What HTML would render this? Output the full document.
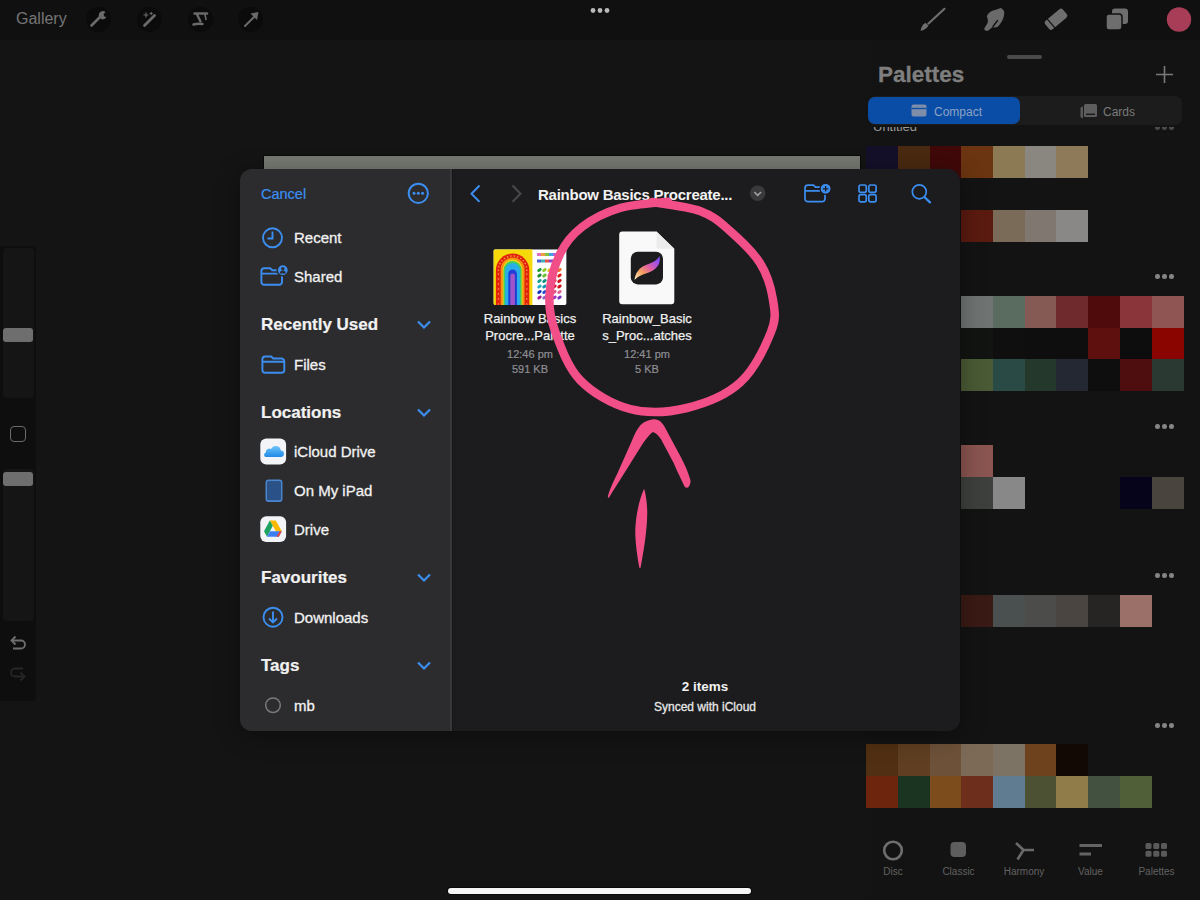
<!DOCTYPE html>
<html><head><meta charset="utf-8">
<style>
*{box-sizing:border-box;margin:0;padding:0}
html,body{width:1200px;height:900px;overflow:hidden;background:#141414;font-family:"Liberation Sans",sans-serif}
.abs{position:absolute}
#topbar{left:0;top:0;width:1200px;height:40px;background:#101010}
#gallery{left:16px;top:10px;font-size:16px;color:#757575}
.tcirc{width:25px;height:25px;border-radius:50%;background:#0b0b0b}
#palpanel{left:865px;top:40px;width:335px;height:860px;background:#131313}
.sw{position:absolute;width:32px;height:32px}
.dots{position:absolute;width:22px;height:6px}
.dots i{position:absolute;top:0;width:4.6px;height:4.6px;border-radius:50%;background:#858585}
#dialog{left:240px;top:169px;width:720px;height:562px;border-radius:12px;overflow:hidden;background:#1c1c1e;box-shadow:0 4px 24px rgba(0,0,0,0.35)}
#side{left:0;top:0;width:212px;height:562px;background:#2c2c2e;border-right:2px solid #38383a;box-shadow:1px 0 0 #161618}
.blue{color:#3b8ef0}
.si{position:absolute;left:54px;font-size:15px;color:#f2f2f2;-webkit-text-stroke:0.3px #f2f2f2}
.sh{position:absolute;left:21px;font-size:17px;font-weight:bold;color:#f2f2f2;-webkit-text-stroke:0.2px #f2f2f2}
.chev{position:absolute;left:176px;width:14px;height:9px}
</style></head>
<body>
<div id="topbar" class="abs">
  <div id="gallery" class="abs">Gallery</div>
  <div class="abs tcirc" style="left:86px;top:7px"></div>
  <div class="abs tcirc" style="left:137px;top:7px"></div>
  <div class="abs tcirc" style="left:188px;top:7px"></div>
  <div class="abs tcirc" style="left:238px;top:7px"></div>
  <svg class="abs" style="left:0;top:0" width="1200" height="40" viewBox="0 0 1200 40">
    <!-- wrench -->
    <path d="M91.5 25.5L100 17" stroke="#6a6a6a" stroke-width="2.6" stroke-linecap="round"/>
    <path d="M99 13.5a4.2 4.2 0 0 0 5.5 5.5l2-2-2.3-.6-.6-2.3 2-2a4.2 4.2 0 0 0-6.6 1.4z" fill="#6a6a6a"/>
    <!-- magic wand -->
    <path d="M144.5 25.5L154.5 15.5" stroke="#6a6a6a" stroke-width="2.8" stroke-linecap="round"/>
    <path d="M146 12.5v5M143.5 15h5M151.2 12v3M149.7 13.5h3" stroke="#6a6a6a" stroke-width="1.2"/>
    <!-- S selection -->
    <path d="M194.5 13.5h12.5" stroke="#6a6a6a" stroke-width="2.4" stroke-linecap="round"/>
    <path d="M197 14.5l3.5 7" stroke="#6a6a6a" stroke-width="2.4" stroke-linecap="round"/>
    <path d="M193.5 24.5c3-1 6-1 9-.5" stroke="#6a6a6a" stroke-width="2.4" stroke-linecap="round" fill="none"/>
    <path d="M205 14.5l1 5" stroke="#6a6a6a" stroke-width="1.6" stroke-linecap="round"/>
    <!-- arrow -->
    <path d="M245 26L255.5 15.5" stroke="#6a6a6a" stroke-width="2" stroke-linecap="round"/>
    <path d="M250.5 13.5l8-1.5-1.5 8z" fill="#6a6a6a"/>
    <!-- dots -->
    <circle cx="593" cy="10.5" r="2.4" fill="#b8b8b8"/><circle cx="600" cy="10.5" r="2.4" fill="#b8b8b8"/><circle cx="607" cy="10.5" r="2.4" fill="#b8b8b8"/>
    <!-- brush -->
    <path d="M928.5 23.5L944.5 8.8" stroke="#6e6e6e" stroke-width="2.2" stroke-linecap="round"/>
    <path d="M920.5 30.8c.5-3 2-6.5 5-8l3 2.8c-1.5 3-4.5 4.8-8 5.2z" fill="#6e6e6e"/>
    <!-- smudge -->
    <path d="M984.2 29.2C984.5 27 986.5 25.5 987.5 23C988.5 21 987.5 18 986.8 16.2C988 13.5 990 11.5 993 10.5C995.5 9.8 998 9.2 1000.6 8C1002.5 9 1004.5 10.5 1004.3 12.8C1004 15.5 1003.8 17.5 1002.8 19.5C1001.8 21.5 1000 24.5 997.8 26.8C996 27.5 994 28 992.5 27C990.5 28.5 989 30.5 987.8 30.8C986.5 31 984.8 30.5 984.2 29.2z" fill="#6a6a6a"/>
    <path d="M993 26.5L997.5 20.5" stroke="#101010" stroke-width="1.3" stroke-linecap="round"/>
    <!-- eraser -->
    <g transform="translate(1056 19.2) rotate(-40)">
      <rect x="-11.5" y="-5.5" width="23" height="11" rx="2.5" fill="#6e6e6e"/>
      <path d="M-6.5 -6V6" stroke="#101010" stroke-width="1.2"/>
    </g>
    <!-- layers -->
    <rect x="1112" y="8.5" width="16" height="15.5" rx="3" fill="#6e6e6e"/>
    <rect x="1106" y="14" width="16" height="16" rx="3" fill="#6e6e6e" stroke="#121212" stroke-width="1.5"/>
    <circle cx="1179" cy="19.5" r="12.2" fill="#a83d57"/>
  </svg>
</div>

<div id="leftbar" class="abs" style="left:0;top:246px;width:36px;height:455px;background:#0e0e0e;border-radius:0 4px 4px 0">
  <div class="abs" style="left:3px;top:2px;width:31px;height:150px;border-radius:4px;background:#151515"></div>
  <div class="abs" style="left:3px;top:82px;width:30px;height:14px;border-radius:3px;background:#6e6e6e"></div>
  <div class="abs" style="left:10px;top:180px;width:16px;height:16px;border-radius:4px;border:1.6px solid #6a6a6a"></div>
  <div class="abs" style="left:3px;top:223px;width:31px;height:152px;border-radius:4px;background:#151515"></div>
  <div class="abs" style="left:3px;top:226px;width:30px;height:14px;border-radius:3px;background:#6e6e6e"></div>
  <svg class="abs" style="left:8px;top:386px" width="20" height="50" viewBox="0 0 20 50">
    <path d="M4 8.5h9a4 4 0 0 1 0 8H5" fill="none" stroke="#6e6e6e" stroke-width="1.8"/>
    <path d="M7.5 4.5L3.5 8.5l4 4" fill="none" stroke="#6e6e6e" stroke-width="1.8"/>
    <path d="M16 44.5H7a4 4 0 0 1 0-8h8" fill="none" stroke="#262626" stroke-width="1.8"/>
    <path d="M12.5 40.5l4 4-4 4" fill="none" stroke="#262626" stroke-width="1.8"/>
  </svg>
</div>

<div id="palpanel" class="abs">
  <div class="abs" style="left:142px;top:15px;width:35px;height:4px;border-radius:2px;background:#4a4a4a"></div>
  <div class="abs" style="left:13px;top:21.5px;font-size:22.5px;font-weight:bold;color:#7e7e7e;-webkit-text-stroke:0.3px #7e7e7e">Palettes</div>
  <svg class="abs" style="left:290px;top:25px" width="19" height="19" viewBox="0 0 19 19"><path d="M9.5 1V18M1 9.5H18" stroke="#7a7a7a" stroke-width="1.6"/></svg>
  <div class="abs" style="left:3px;top:56px;width:314px;height:29px;border-radius:7px;background:#1c1c1c"></div>
  <div class="abs" style="left:3px;top:57px;width:152px;height:27px;border-radius:7px;background:#0a4da6"></div>
  <svg class="abs" style="left:0;top:56px" width="335" height="30" viewBox="865 96 335 30">
    <rect x="911.5" y="104.5" width="15" height="12" rx="2" fill="#7e8ea8"/>
    <path d="M911.5 108.5h15" stroke="#0a4da6" stroke-width="1.3"/>
    <path d="M1083 106.5l-2.5 1v9.5l2.5 1.5z" fill="#5a5a5a"/>
    <rect x="1084" y="104" width="13" height="13" rx="1.5" fill="#5e5e5e"/>
    <path d="M1086 114.3h9" stroke="#1c1c1c" stroke-width="1.5"/>
  </svg>
  <div class="abs" style="left:69px;top:64.5px;font-size:12px;color:#8ea2c4">Compact</div>
  <div class="abs" style="left:238px;top:64.5px;font-size:12px;color:#7a7a7a">Cards</div>
  <div class="abs" style="left:8px;top:79px;font-size:13px;color:#9a9a9a;clip-path:inset(8px 0 0 0)">Untitled</div>
<div class="sw" style="left:1.2px;top:106.0px;background:#14102a"></div>
<div class="sw" style="left:32.9px;top:106.0px;background:#4a2a10"></div>
<div class="sw" style="left:64.6px;top:106.0px;background:#400808"></div>
<div class="sw" style="left:96.3px;top:106.0px;background:#6a3510"></div>
<div class="sw" style="left:128.0px;top:106.0px;background:#8c7a55"></div>
<div class="sw" style="left:159.7px;top:106.0px;background:#8a8780"></div>
<div class="sw" style="left:191.4px;top:106.0px;background:#8e7a58"></div>
<div class="sw" style="left:96.3px;top:169.5px;background:#5a1a10"></div>
<div class="sw" style="left:128.0px;top:169.5px;background:#7a6a58"></div>
<div class="sw" style="left:159.7px;top:169.5px;background:#807870"></div>
<div class="sw" style="left:191.4px;top:169.5px;background:#8a8886"></div>
<div class="sw" style="left:96.3px;top:255.5px;background:#6f7473"></div>
<div class="sw" style="left:128.0px;top:255.5px;background:#5a6b60"></div>
<div class="sw" style="left:159.7px;top:255.5px;background:#855a55"></div>
<div class="sw" style="left:191.4px;top:255.5px;background:#6e2a2c"></div>
<div class="sw" style="left:223.1px;top:255.5px;background:#4f0a0c"></div>
<div class="sw" style="left:254.8px;top:255.5px;background:#8a353a"></div>
<div class="sw" style="left:286.5px;top:255.5px;background:#8e5553"></div>
<div class="sw" style="left:96.3px;top:287.5px;background:#111410"></div>
<div class="sw" style="left:128.0px;top:287.5px;background:#0f0f0f"></div>
<div class="sw" style="left:159.7px;top:287.5px;background:#0e0e0e"></div>
<div class="sw" style="left:191.4px;top:287.5px;background:#0e0e0e"></div>
<div class="sw" style="left:223.1px;top:287.5px;background:#5e100e"></div>
<div class="sw" style="left:254.8px;top:287.5px;background:#0d0d0d"></div>
<div class="sw" style="left:286.5px;top:287.5px;background:#8a0500"></div>
<div class="sw" style="left:96.3px;top:319.0px;background:#4a5a35"></div>
<div class="sw" style="left:128.0px;top:319.0px;background:#2a4a45"></div>
<div class="sw" style="left:159.7px;top:319.0px;background:#25382c"></div>
<div class="sw" style="left:191.4px;top:319.0px;background:#232833"></div>
<div class="sw" style="left:223.1px;top:319.0px;background:#0e0e0e"></div>
<div class="sw" style="left:254.8px;top:319.0px;background:#4e0e10"></div>
<div class="sw" style="left:286.5px;top:319.0px;background:#2a3a33"></div>
<div class="sw" style="left:96.3px;top:404.8px;background:#8a5550"></div>
<div class="sw" style="left:96.3px;top:436.5px;background:#3e403d"></div>
<div class="sw" style="left:128.0px;top:436.5px;background:#888888"></div>
<div class="sw" style="left:254.8px;top:436.5px;background:#05041a"></div>
<div class="sw" style="left:286.5px;top:436.5px;background:#4a443e"></div>
<div class="sw" style="left:96.3px;top:554.5px;background:#3a1a14"></div>
<div class="sw" style="left:128.0px;top:554.5px;background:#4a5050"></div>
<div class="sw" style="left:159.7px;top:554.5px;background:#4c4c4a"></div>
<div class="sw" style="left:191.4px;top:554.5px;background:#4a4540"></div>
<div class="sw" style="left:223.1px;top:554.5px;background:#272523"></div>
<div class="sw" style="left:254.8px;top:554.5px;background:#9a7068"></div>
<div class="sw" style="left:1.2px;top:703.8px;background:#512f12"></div>
<div class="sw" style="left:32.9px;top:703.8px;background:#5f3e21"></div>
<div class="sw" style="left:64.6px;top:703.8px;background:#6d5139"></div>
<div class="sw" style="left:96.3px;top:703.8px;background:#7c6956"></div>
<div class="sw" style="left:128.0px;top:703.8px;background:#7c7364"></div>
<div class="sw" style="left:159.7px;top:703.8px;background:#6d421c"></div>
<div class="sw" style="left:191.4px;top:703.8px;background:#120904"></div>
<div class="sw" style="left:1.2px;top:735.8px;background:#6d250e"></div>
<div class="sw" style="left:32.9px;top:735.8px;background:#1b3421"></div>
<div class="sw" style="left:64.6px;top:735.8px;background:#7c4c1c"></div>
<div class="sw" style="left:96.3px;top:735.8px;background:#6d2f1c"></div>
<div class="sw" style="left:128.0px;top:735.8px;background:#5f7c90"></div>
<div class="sw" style="left:159.7px;top:735.8px;background:#4c5134"></div>
<div class="sw" style="left:191.4px;top:735.8px;background:#907c48"></div>
<div class="sw" style="left:223.1px;top:735.8px;background:#425140"></div>
<div class="sw" style="left:254.8px;top:735.8px;background:#515f39"></div>

  <div class="abs" style="left:285px;top:87px;width:30px;height:5px;overflow:hidden"><div class="dots" style="left:5px;top:-2px"><i style="left:0;background:#4a4a4a"></i><i style="left:7px;background:#4a4a4a"></i><i style="left:14px;background:#4a4a4a"></i></div></div>
  <div class="dots" style="left:290px;top:234px"><i style="left:0"></i><i style="left:7px"></i><i style="left:14px"></i></div>
  <div class="dots" style="left:290px;top:384px"><i style="left:0"></i><i style="left:7px"></i><i style="left:14px"></i></div>
  <div class="dots" style="left:290px;top:533px"><i style="left:0"></i><i style="left:7px"></i><i style="left:14px"></i></div>
  <div class="dots" style="left:290px;top:683px"><i style="left:0"></i><i style="left:7px"></i><i style="left:14px"></i></div>
  <svg class="abs" style="left:0;top:790px" width="335" height="50" viewBox="865 830 335 50">
    <circle cx="893" cy="850.5" r="8.8" fill="none" stroke="#6e6e6e" stroke-width="2.6"/>
    <rect x="950.5" y="842" width="15.5" height="15" rx="4" fill="#5e5e5e"/>
    <path d="M1016 843L1023.5 850L1017.5 859.5M1023.5 850H1034" fill="none" stroke="#6a6a6a" stroke-width="2.6"/>
    <path d="M1079.5 845.5H1102M1079.5 854H1091" stroke="#646464" stroke-width="3.2"/>
    <g fill="#5a5a5a"><rect x="1145.5" y="843" width="6" height="6" rx="1.5"/><rect x="1153.3" y="843" width="6" height="6" rx="1.5"/><rect x="1161" y="843" width="6" height="6" rx="1.5"/><rect x="1145.5" y="850.8" width="6" height="6" rx="1.5"/><rect x="1153.3" y="850.8" width="6" height="6" rx="1.5"/><rect x="1161" y="850.8" width="6" height="6" rx="1.5"/></g>
    <g font-family="Liberation Sans" font-size="10" fill="#626262" text-anchor="middle"><text x="893" y="874.5">Disc</text><text x="958.5" y="874.5">Classic</text><text x="1024" y="874.5">Harmony</text><text x="1090.5" y="874.5">Value</text><text x="1156.5" y="874.5">Palettes</text></g>
  </svg>
</div>


<div class="abs" style="left:264px;top:156px;width:596px;height:13px;background:#777973;box-shadow:0 0 0 1px #0a0a0a"></div>

<div id="dialog" class="abs">
  <div id="side" class="abs">
    <div class="abs blue" style="left:21px;top:16.5px;font-size:14.5px;-webkit-text-stroke:0.2px #3b8ef0">Cancel</div>
    <svg class="abs" style="left:0;top:0" width="211" height="562" viewBox="240 169 211 562">
      <defs><linearGradient id="icg" x1="0" y1="0" x2="0" y2="1"><stop offset="0" stop-color="#6cc4fa"/><stop offset="1" stop-color="#1f8ae8"/></linearGradient></defs>
      <g fill="none" stroke="#3b8ef0" stroke-width="1.9">
        <circle cx="418.3" cy="193.3" r="9.6" stroke-width="2"/>
        <circle cx="272.5" cy="237.8" r="9.5"/>
        <path d="M272.5 231.5V238.5H267.5"/>
        <path d="M264.2 268.2h6l2 2h7a2.8 2.8 0 0 1 2.8 2.8v9a2.8 2.8 0 0 1-2.8 2.8h-15a2.8 2.8 0 0 1-2.8-2.8v-11a2.8 2.8 0 0 1 2.8-2.8z M261.5 273.6h20"/>
        <path d="M265.2 356.5h6l2 2h8.3a2.8 2.8 0 0 1 2.8 2.8v8.7a2.8 2.8 0 0 1-2.8 2.8h-16.3a2.8 2.8 0 0 1-2.8-2.8v-10.7a2.8 2.8 0 0 1 2.8-2.8z M262.4 361.8h21.9"/>
        <rect x="266.5" y="480.5" width="15" height="20.5" rx="2" stroke="#4a86d0"/>
        <circle cx="273" cy="617.2" r="9.5"/>
        <path d="M273 611.5v10.5M269 618.5l4 4 4-4"/>
        <path d="M418 321.5l6 6 6-6M418 409.5l6 6 6-6M418 574.5l6 6 6-6M418 662.5l6 6 6-6" stroke-width="2.2"/>
      </g>
      <g fill="#3b8ef0"><circle cx="414" cy="193.3" r="1.5"/><circle cx="418.3" cy="193.3" r="1.5"/><circle cx="422.6" cy="193.3" r="1.5"/>
      <circle cx="282.8" cy="270.2" r="5.6" stroke="#2c2c2e" stroke-width="1.5"/></g>
      <rect x="267.2" y="481.2" width="13.6" height="19.1" rx="1.5" fill="#2a5288"/>
      <circle cx="282.8" cy="268.8" r="1.7" fill="#2c2c2e"/><path d="M279.8 273.6a3 3 0 0 1 6 0z" fill="#2c2c2e"/>
      <circle cx="273" cy="705.2" r="7.3" fill="none" stroke="#7a7a7e" stroke-width="1.5"/>
      <!-- iCloud -->
      <rect x="260.3" y="438.6" width="25.8" height="25.8" rx="6" fill="#f2f4f7"/>
      <path d="M266 457h14.5a3.3 3.3 0 0 0 .3-6.6 5.2 5.2 0 0 0-9.8-1.5 3.8 3.8 0 0 0-5.3 3.8 2.2 2.2 0 0 0 .3 4.3z" fill="url(#icg)"/>
      <!-- Drive -->
      <rect x="260.3" y="516.2" width="25.8" height="25.8" rx="6" fill="#f2f4f7"/>
      <path d="M269.8 520.5H275.8L281.8 531.2H275.8z" fill="#ffba00"/>
      <path d="M269.8 520.5L272.8 525.8L267 536.8L264 531.2z" fill="#1ea362"/>
      <path d="M267 536.8H278.8L281.8 531.2H270z" fill="#3b7ef0"/>
      <path d="M278.8 536.8L281.8 531.2H279.5L276.5 536.8z" fill="#e8453c"/>
    </svg>
    <div class="si" style="top:60px">Recent</div>
    <div class="si" style="top:99px">Shared</div>
    <div class="sh" style="top:146px">Recently Used</div>
    <div class="si" style="top:187px">Files</div>
    <div class="sh" style="top:234px">Locations</div>
    <div class="si" style="top:274px">iCloud Drive</div>
    <div class="si" style="top:313px">On My iPad</div>
    <div class="si" style="top:352px">Drive</div>
    <div class="sh" style="top:399px">Favourites</div>
    <div class="si" style="top:440px">Downloads</div>
    <div class="sh" style="top:487px">Tags</div>
    <div class="si" style="top:528px">mb</div>
  </div>
  <svg class="abs" style="left:0;top:0" width="720" height="562" viewBox="240 169 720 562">
    <path d="M479.5 185.5l-8 8.2 8 8.2" fill="none" stroke="#3b8ef0" stroke-width="2"/>
    <path d="M512.5 185.5l8 8.2-8 8.2" fill="none" stroke="#4a4a4c" stroke-width="2"/>
    <circle cx="757.7" cy="193.3" r="7.8" fill="#3a3a3c"/>
    <path d="M754.3 192l3.4 3.4 3.4-3.4" fill="none" stroke="#a0a0a4" stroke-width="1.5"/>
    <g fill="none" stroke="#3b8ef0" stroke-width="1.7">
      <path d="M808 185.2h5.5l2 2h6.5a3 3 0 0 1 3 3v8.5a3 3 0 0 1-3 3h-14a3 3 0 0 1-3-3v-10.5a3 3 0 0 1 3-3z M805.5 190.8h19"/>
      <rect x="859" y="185" width="7.3" height="7.3" rx="1.8"/><rect x="868.8" y="185" width="7.3" height="7.3" rx="1.8"/>
      <rect x="859" y="194.6" width="7.3" height="7.3" rx="1.8"/><rect x="868.8" y="194.6" width="7.3" height="7.3" rx="1.8"/>
      <circle cx="919.3" cy="191.8" r="7"/>
      <path d="M924.6 197.2l5.4 5.2" stroke-width="2.2" stroke-linecap="round"/>
    </g>
    <circle cx="825.6" cy="188.8" r="5.6" fill="#3b8ef0" stroke="#1c1c1e" stroke-width="1.4"/>
    <path d="M825.6 186v5.6M822.8 188.8h5.6" stroke="#1c1c1e" stroke-width="1.3"/>
  </svg>
  <div class="abs" style="left:298px;font-size:15px;letter-spacing:-0.25px;top:16.5px;font-weight:bold;color:#f2f2f2">Rainbow Basics Procreate...</div>
<svg class="abs" style="left:0;top:0" width="720" height="562" viewBox="240 169 720 562">
    <defs>
      <clipPath id="thc"><rect x="493.4" y="249.3" width="73.2" height="55.7" rx="2"/></clipPath>
      <linearGradient id="pg" x1="0" y1="1" x2="1" y2="0">
        <stop offset="0" stop-color="#fff4c8"/><stop offset="0.3" stop-color="#f5a060"/><stop offset="0.55" stop-color="#e060a0"/><stop offset="0.8" stop-color="#a050e8"/><stop offset="1" stop-color="#6a50f0"/>
      </linearGradient>
    </defs>
    <g clip-path="url(#thc)">
      <rect x="493.4" y="249.3" width="73.2" height="55.7" fill="#ffffff"/>
      <rect x="493.4" y="249.3" width="39" height="55.7" fill="#f5d90a"/>
      <path d="M495.9 306V270.2a16.7 16.7 0 0 1 33.4 0V306z" fill="#e3220f"/>
      <path d="M500.7 306V269.4a11.9 11.9 0 0 1 23.8 0V306z" fill="#f7940f"/>
      <path d="M502.8 306V269.3a9.8 9.8 0 0 1 19.6 0V306z" fill="#f2d21a"/>
      <path d="M503.6 306V270.0a9.0 9.0 0 0 1 18.0 0V306z" fill="#3fcf5a"/>
      <path d="M505.1 306V270.5a7.5 7.5 0 0 1 15.0 0V306z" fill="#2aaee8"/>
      <path d="M508.3 306V273.8a4.3 4.3 0 0 1 8.6 0V306z" fill="#1f3fd6"/>
      <path d="M510.3 306V275.8a2.3 2.3 0 0 1 4.6 0V306z" fill="#a056c8"/>
      <circle cx="498.4" cy="270.2" r="0.8" fill="#f7a040"/>
      <circle cx="498.8" cy="266.8" r="0.8" fill="#f7a040"/>
      <circle cx="500.0" cy="263.6" r="0.8" fill="#f7a040"/>
      <circle cx="502.0" cy="260.8" r="0.8" fill="#f7a040"/>
      <circle cx="504.5" cy="258.5" r="0.8" fill="#f7a040"/>
      <circle cx="507.6" cy="256.9" r="0.8" fill="#f7a040"/>
      <circle cx="510.9" cy="256.1" r="0.8" fill="#f7a040"/>
      <circle cx="514.3" cy="256.1" r="0.8" fill="#f7a040"/>
      <circle cx="517.6" cy="256.9" r="0.8" fill="#f7a040"/>
      <circle cx="520.7" cy="258.5" r="0.8" fill="#f7a040"/>
      <circle cx="523.2" cy="260.8" r="0.8" fill="#f7a040"/>
      <circle cx="525.2" cy="263.6" r="0.8" fill="#f7a040"/>
      <circle cx="526.4" cy="266.8" r="0.8" fill="#f7a040"/>
      <circle cx="526.8" cy="270.2" r="0.8" fill="#f7a040"/>
      <circle cx="498.4" cy="274" r="0.8" fill="#f7a040"/><circle cx="526.8" cy="274" r="0.8" fill="#f7a040"/>
      <circle cx="498.4" cy="279" r="0.8" fill="#f7a040"/><circle cx="526.8" cy="279" r="0.8" fill="#f7a040"/>
      <circle cx="498.4" cy="284" r="0.8" fill="#f7a040"/><circle cx="526.8" cy="284" r="0.8" fill="#f7a040"/>
      <circle cx="498.4" cy="289" r="0.8" fill="#f7a040"/><circle cx="526.8" cy="289" r="0.8" fill="#f7a040"/>
      <circle cx="498.4" cy="294" r="0.8" fill="#f7a040"/><circle cx="526.8" cy="294" r="0.8" fill="#f7a040"/>
      <circle cx="498.4" cy="299" r="0.8" fill="#f7a040"/><circle cx="526.8" cy="299" r="0.8" fill="#f7a040"/>
      <circle cx="498.4" cy="304" r="0.8" fill="#f7a040"/><circle cx="526.8" cy="304" r="0.8" fill="#f7a040"/>
      <g stroke-width="3.2"><path d="M537 254.5h4" stroke="#e070c0"/><path d="M541 254.5h4" stroke="#f0a040"/><path d="M545 254.5h4" stroke="#80c040"/><path d="M549 254.5h4" stroke="#40a0e0"/><path d="M553 254.5h5" stroke="#b060e0"/><path d="M537 261h4" stroke="#5060d0"/><path d="M541 261h4" stroke="#40b0b0"/><path d="M545 261h4" stroke="#e05050"/><path d="M549 261h5" stroke="#9040c0"/></g>
      <g>
        <ellipse cx="539.5" cy="270" rx="2.4" ry="1.6" transform="rotate(-35 539.5 270)" fill="#1e9a3a"/><ellipse cx="544.5" cy="270" rx="2.4" ry="1.6" transform="rotate(-35 544.5 270)" fill="#8acc2a"/><ellipse cx="549.5" cy="270" rx="2.4" ry="1.6" transform="rotate(-35 549.5 270)" fill="#e8c020"/><ellipse cx="554.5" cy="270" rx="2.4" ry="1.6" transform="rotate(-35 554.5 270)" fill="#f08a20"/><ellipse cx="559.5" cy="270" rx="2.4" ry="1.6" transform="rotate(-35 559.5 270)" fill="#f06a20"/>
        <ellipse cx="539.5" cy="275.5" rx="2.4" ry="1.6" transform="rotate(-35 539.5 275.5)" fill="#1a8a30"/><ellipse cx="544.5" cy="275.5" rx="2.4" ry="1.6" transform="rotate(-35 544.5 275.5)" fill="#6abf2a"/><ellipse cx="549.5" cy="275.5" rx="2.4" ry="1.6" transform="rotate(-35 549.5 275.5)" fill="#f0a030"/><ellipse cx="554.5" cy="275.5" rx="2.4" ry="1.6" transform="rotate(-35 554.5 275.5)" fill="#e83020"/><ellipse cx="559.5" cy="275.5" rx="2.4" ry="1.6" transform="rotate(-35 559.5 275.5)" fill="#e01818"/>
        <ellipse cx="539.5" cy="281" rx="2.4" ry="1.6" transform="rotate(-35 539.5 281)" fill="#18a090"/><ellipse cx="544.5" cy="281" rx="2.4" ry="1.6" transform="rotate(-35 544.5 281)" fill="#109080"/><ellipse cx="549.5" cy="281" rx="2.4" ry="1.6" transform="rotate(-35 549.5 281)" fill="#e03040"/><ellipse cx="554.5" cy="281" rx="2.4" ry="1.6" transform="rotate(-35 554.5 281)" fill="#e02030"/><ellipse cx="559.5" cy="281" rx="2.4" ry="1.6" transform="rotate(-35 559.5 281)" fill="#d01020"/>
        <ellipse cx="539.5" cy="286.5" rx="2.4" ry="1.6" transform="rotate(-35 539.5 286.5)" fill="#20b0c0"/><ellipse cx="544.5" cy="286.5" rx="2.4" ry="1.6" transform="rotate(-35 544.5 286.5)" fill="#1890b0"/><ellipse cx="549.5" cy="286.5" rx="2.4" ry="1.6" transform="rotate(-35 549.5 286.5)" fill="#e02040"/><ellipse cx="554.5" cy="286.5" rx="2.4" ry="1.6" transform="rotate(-35 554.5 286.5)" fill="#d81030"/><ellipse cx="559.5" cy="286.5" rx="2.4" ry="1.6" transform="rotate(-35 559.5 286.5)" fill="#d01018"/>
        <ellipse cx="539.5" cy="292" rx="2.4" ry="1.6" transform="rotate(-35 539.5 292)" fill="#1830c0"/><ellipse cx="544.5" cy="292" rx="2.4" ry="1.6" transform="rotate(-35 544.5 292)" fill="#2050d0"/><ellipse cx="549.5" cy="292" rx="2.4" ry="1.6" transform="rotate(-35 549.5 292)" fill="#e04070"/><ellipse cx="554.5" cy="292" rx="2.4" ry="1.6" transform="rotate(-35 554.5 292)" fill="#e05080"/><ellipse cx="559.5" cy="292" rx="2.4" ry="1.6" transform="rotate(-35 559.5 292)" fill="#e06090"/>
        <ellipse cx="539.5" cy="297.5" rx="2.4" ry="1.6" transform="rotate(-35 539.5 297.5)" fill="#a01890"/><ellipse cx="544.5" cy="297.5" rx="2.4" ry="1.6" transform="rotate(-35 544.5 297.5)" fill="#9060c0"/><ellipse cx="549.5" cy="297.5" rx="2.4" ry="1.6" transform="rotate(-35 549.5 297.5)" fill="#b040b0"/><ellipse cx="554.5" cy="297.5" rx="2.4" ry="1.6" transform="rotate(-35 554.5 297.5)" fill="#a030c0"/><ellipse cx="559.5" cy="297.5" rx="2.4" ry="1.6" transform="rotate(-35 559.5 297.5)" fill="#8030c0"/>
      </g>
    </g>
    <path d="M622.2 231.5h34.3l17.8 17.3v52.4a3 3 0 0 1-3 3h-49.1a3 3 0 0 1-3-3v-66.7a3 3 0 0 1 3-3z" fill="#f9f9f9"/>
    <path d="M656.5 231.5v14.3a3 3 0 0 0 3 3h14.8z" fill="#ececec"/>
    <rect x="630.8" y="251.8" width="32.2" height="32.6" rx="7" fill="#1c1c1e"/>
    <path d="M634.5 280c1-7.5 5-12.5 11.5-15 6.5-2.5 10.5-4 13.5-9 1.5 7-2 12.5-8.5 15.5-6 2.8-11.5 3-16.5 8.5z" fill="url(#pg)"/>
  </svg>
  <div class="abs" style="left:230px;top:141px;width:120px;text-align:center;font-size:13px;line-height:17px;color:#f0f0f0;-webkit-text-stroke:0.25px #f0f0f0">Rainbow Basics<br>Procre...Palette</div>
  <div class="abs" style="left:230px;top:177.5px;width:120px;text-align:center;font-size:11px;line-height:15.5px;color:#8e8e93;-webkit-text-stroke:0.2px #8e8e93">12:46 pm<br>591 KB</div>
  <div class="abs" style="left:347px;top:141px;width:120px;text-align:center;font-size:13px;line-height:17px;color:#f0f0f0;-webkit-text-stroke:0.25px #f0f0f0">Rainbow_Basic<br>s_Proc...atches</div>
  <div class="abs" style="left:347px;top:177.5px;width:120px;text-align:center;font-size:11px;line-height:15.5px;color:#8e8e93;-webkit-text-stroke:0.2px #8e8e93">12:41 pm<br>5 KB</div>
  <div class="abs" style="left:360px;top:509.5px;width:210px;text-align:center;font-size:13.5px;font-weight:bold;color:#f2f2f2">2 items</div>
  <div class="abs" style="left:360px;top:531px;width:210px;text-align:center;font-size:12px;color:#e6e6e6;-webkit-text-stroke:0.3px #e6e6e6">Synced with iCloud</div>
</div>
<svg class="abs" style="left:0;top:0;pointer-events:none" width="1200" height="900" viewBox="0 0 1200 900">
  <g fill="none" stroke="#f24f89" stroke-width="8.5" stroke-linecap="round" stroke-linejoin="round">
    <path d="M668.0 201.8C660.0 202.8 634.3 203.8 620.0 208.0C605.7 212.2 592.0 219.3 582.0 227.0C572.0 234.7 565.4 242.7 560.0 254.0C554.6 265.3 550.3 282.2 549.5 295.0C548.7 307.8 549.9 316.8 555.0 331.0C560.1 345.2 567.5 367.0 580.0 380.0C592.5 393.0 612.2 404.3 630.0 409.0C647.8 413.7 668.4 412.4 686.7 408.0C705.0 403.6 726.0 395.4 740.0 382.7C754.0 370.0 765.5 345.8 771.0 332.0C776.5 318.2 774.8 311.5 773.0 300.0C771.2 288.5 767.4 274.7 760.0 263.0C752.6 251.3 738.9 238.7 728.9 230.0C718.9 221.3 712.8 215.7 700.0 211.0C687.2 206.3 660.0 203.5 652.0 202.0"/>
  </g>
  <g fill="#f24f89">
    <path d="M653.7 419.2C648 420 644 422 640.8 424.7C637 429 634 435 631.7 441.2L617 474.2C613 482 610 489 607.8 496.2C608 498 609 498 608.75 498C613 491 618 483 622.5 476L640.8 446.7C645 440 649 435 652.75 432C656 433 659 436 661 439.3L673.8 463.2C677 471 681 479 684.8 487C686 488 688 488 688.5 487C690 485 691 482 690.3 479.7C688 472 685 465 681.2 457.7L668.3 433.8C666 429 664 425 661 421.9C659 420 656 419 653.7 419.2z"/>
    <path d="M644.1 488.8C646 495 647.5 505 647.2 515C647 530 644 550 640.5 567.7C640 568 639.5 568 639.3 567.5C637 555 635 540 635.3 529.2C636 515 639 500 644.1 488.8z"/>
  </g>
</svg>
<div class="abs" style="left:448px;top:888px;width:303px;height:6px;border-radius:3px;background:#f6f6f6;box-shadow:0 0 0 1px #0a0a0a"></div>
</body></html>
